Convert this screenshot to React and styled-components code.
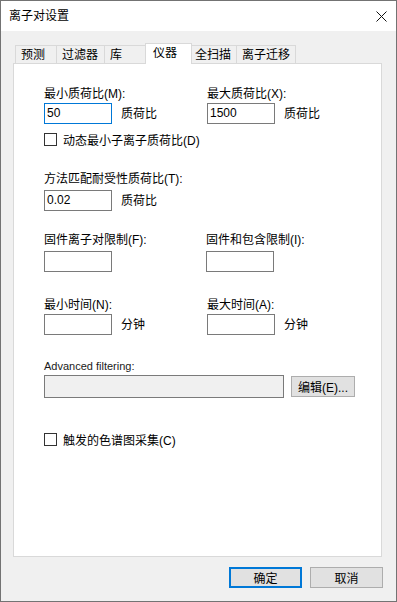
import React from "react";
import styled, { createGlobalStyle, css } from "styled-components";

const GlobalStyle = createGlobalStyle`
  html, body { margin: 0; padding: 0; background: #ffffff; }
  body {
    font-family: "Liberation Sans", "Noto Sans CJK SC", sans-serif;
    font-size: 12px;
    color: #000000;
  }
`;

const Window = styled.div`
  width: 397px;
  height: 602px;
  box-sizing: border-box;
  border: 1px solid #737373;
  background: #f0f0f0;
  display: flex;
  flex-direction: column;
  overflow: hidden;
`;

const TitleBar = styled.div`
  height: 30px;
  flex: none;
  background: #ffffff;
  display: flex;
  align-items: center;
  justify-content: space-between;
  padding: 0 9px 0 8px;
`;

const TitleText = styled.div`
  line-height: 14px;
  font-size: 12px;
`;

const CloseIcon = () => (
  <svg width="11" height="11" viewBox="0 0 11 11" style={{ display: "block" }}>
    <path d="M0.5 0.5 L10.5 10.5 M10.5 0.5 L0.5 10.5" stroke="#111" strokeWidth="1" fill="none" />
  </svg>
);

const Body = styled.div`
  flex: 1;
  display: flex;
  flex-direction: column;
  padding: 12px 0 0 12px;
`;

const TabStrip = styled.div`
  display: flex;
  align-items: flex-end;
  height: 20px;
  padding-left: 2px;
`;

const Tab = styled.div`
  box-sizing: border-box;
  width: ${(p) => p.$w}px;
  height: 18px;
  margin-left: -1px;
  border: 1px solid #d9d9d9;
  border-bottom: none;
  background: #f0f0f0;
  padding: 2px 0 0 5px;
  line-height: 15px;
  white-space: nowrap;
  &:first-child { margin-left: 0; }
  ${(p) =>
    p.$active &&
    css`
      height: 21px;
      margin-left: -3px;
      margin-right: -2px;
      margin-bottom: -1px;
      background: #ffffff;
      position: relative;
      z-index: 2;
      padding-left: 7px;
    `}
`;

const Panel = styled.div`
  width: 369px;
  height: 494px;
  box-sizing: border-box;
  border: 1px solid #d9d9d9;
  background: #ffffff;
  padding: 23px 0 0 30px;
`;

const Section = styled.div`
  margin-top: ${(p) => p.$mt || 0}px;
`;

const TwoCol = styled.div`
  display: grid;
  grid-template-columns: 162px 1fr;
`;

const Field = styled.div`
  padding-left: ${(p) => p.$shift || 0}px;
`;

const Label = styled.div`
  height: 14px;
  line-height: 14px;
  white-space: nowrap;
  font-size: ${(p) => (p.$latin ? 11 : 12)}px;
  color: ${(p) => (p.$latin ? "#1a1a1a" : "#000")};
`;

const InputRow = styled.div`
  display: flex;
  align-items: center;
  gap: ${(p) => (p.$gap != null ? p.$gap : 9)}px;
  margin-top: ${(p) => p.$mt || 0}px;
`;

const TextBox = styled.div`
  box-sizing: border-box;
  width: ${(p) => p.$w || 68}px;
  height: ${(p) => p.$h || 21}px;
  border: 1px solid ${(p) => (p.$focus ? "#0078d7" : "#7a7a7a")};
  background: ${(p) => (p.$disabled ? "#f0f0f0" : "#ffffff")};
  padding-left: 2px;
  line-height: ${(p) => (p.$h || 21) - 2}px;
  flex: none;
`;

const Unit = styled.span`
  line-height: 14px;
`;

const CheckRow = styled.div`
  display: flex;
  align-items: center;
  gap: 6px;
  height: 14px;
  margin-top: ${(p) => p.$mt || 0}px;
`;

const CheckBox = styled.div`
  box-sizing: border-box;
  width: 13px;
  height: 13px;
  border: 1px solid #333333;
  background: #ffffff;
  flex: none;
`;

const SmallButton = styled.div`
  box-sizing: border-box;
  width: 64px;
  height: 21px;
  border: 1px solid #adadad;
  background: #e1e1e1;
  display: flex;
  align-items: center;
  justify-content: center;
  white-space: nowrap;
`;

const Footer = styled.div`
  display: flex;
  justify-content: flex-end;
  gap: 8px;
  margin-top: 10px;
  padding-right: 13px;
`;

const DialogButton = styled.div`
  box-sizing: border-box;
  width: 73px;
  height: 21px;
  border: 1px solid #adadad;
  background: #e1e1e1;
  display: flex;
  align-items: center;
  justify-content: center;
  ${(p) =>
    p.$primary &&
    css`
      border: 2px solid #0078d7;
    `}
`;

const tabs = [
  { label: "预测", w: 42 },
  { label: "过滤器", w: 49 },
  { label: "库", w: 44 },
  { label: "仪器", w: 47, active: true },
  { label: "全扫描", w: 48 },
  { label: "离子迁移", w: 60 },
];

export default function App() {
  return (
    <>
      <GlobalStyle />
      <Window>
        <TitleBar>
          <TitleText>离子对设置</TitleText>
          <CloseIcon />
        </TitleBar>
        <Body>
          <TabStrip>
            {tabs.map((t) => (
              <Tab key={t.label} $w={t.w} $active={t.active}>
                {t.label}
              </Tab>
            ))}
          </TabStrip>
          <Panel>
            <Section>
              <TwoCol>
                <Field>
                  <Label>最小质荷比(M):</Label>
                  <InputRow $mt={2}>
                    <TextBox $focus>50</TextBox>
                    <Unit>质荷比</Unit>
                  </InputRow>
                </Field>
                <Field $shift={1}>
                  <Label>最大质荷比(X):</Label>
                  <InputRow $mt={2}>
                    <TextBox>1500</TextBox>
                    <Unit>质荷比</Unit>
                  </InputRow>
                </Field>
              </TwoCol>
              <CheckRow $mt={8}>
                <CheckBox />
                <span>动态最小子离子质荷比(D)</span>
              </CheckRow>
            </Section>

            <Section $mt={26}>
              <Label>方法匹配耐受性质荷比(T):</Label>
              <InputRow $mt={4}>
                <TextBox>0.02</TextBox>
                <Unit>质荷比</Unit>
              </InputRow>
            </Section>

            <Section $mt={22}>
              <TwoCol>
                <Field>
                  <Label>固件离子对限制(F):</Label>
                  <InputRow $mt={4}>
                    <TextBox />
                  </InputRow>
                </Field>
                <Field>
                  <Label>固件和包含限制(I):</Label>
                  <InputRow $mt={4}>
                    <TextBox />
                  </InputRow>
                </Field>
              </TwoCol>
            </Section>

            <Section $mt={26}>
              <TwoCol>
                <Field>
                  <Label>最小时间(N):</Label>
                  <InputRow $mt={2}>
                    <TextBox />
                    <Unit>分钟</Unit>
                  </InputRow>
                </Field>
                <Field $shift={1}>
                  <Label>最大时间(A):</Label>
                  <InputRow $mt={2}>
                    <TextBox />
                    <Unit>分钟</Unit>
                  </InputRow>
                </Field>
              </TwoCol>
            </Section>

            <Section $mt={24}>
              <Label $latin>Advanced filtering:</Label>
              <InputRow $mt={2} $gap={7}>
                <TextBox $w={240} $h={23} $disabled />
                <SmallButton>编辑(E)...</SmallButton>
              </InputRow>
            </Section>

            <Section $mt={34}>
              <CheckRow>
                <CheckBox />
                <span>触发的色谱图采集(C)</span>
              </CheckRow>
            </Section>
          </Panel>
          <Footer>
            <DialogButton $primary>确定</DialogButton>
            <DialogButton>取消</DialogButton>
          </Footer>
        </Body>
      </Window>
    </>
  );
}
